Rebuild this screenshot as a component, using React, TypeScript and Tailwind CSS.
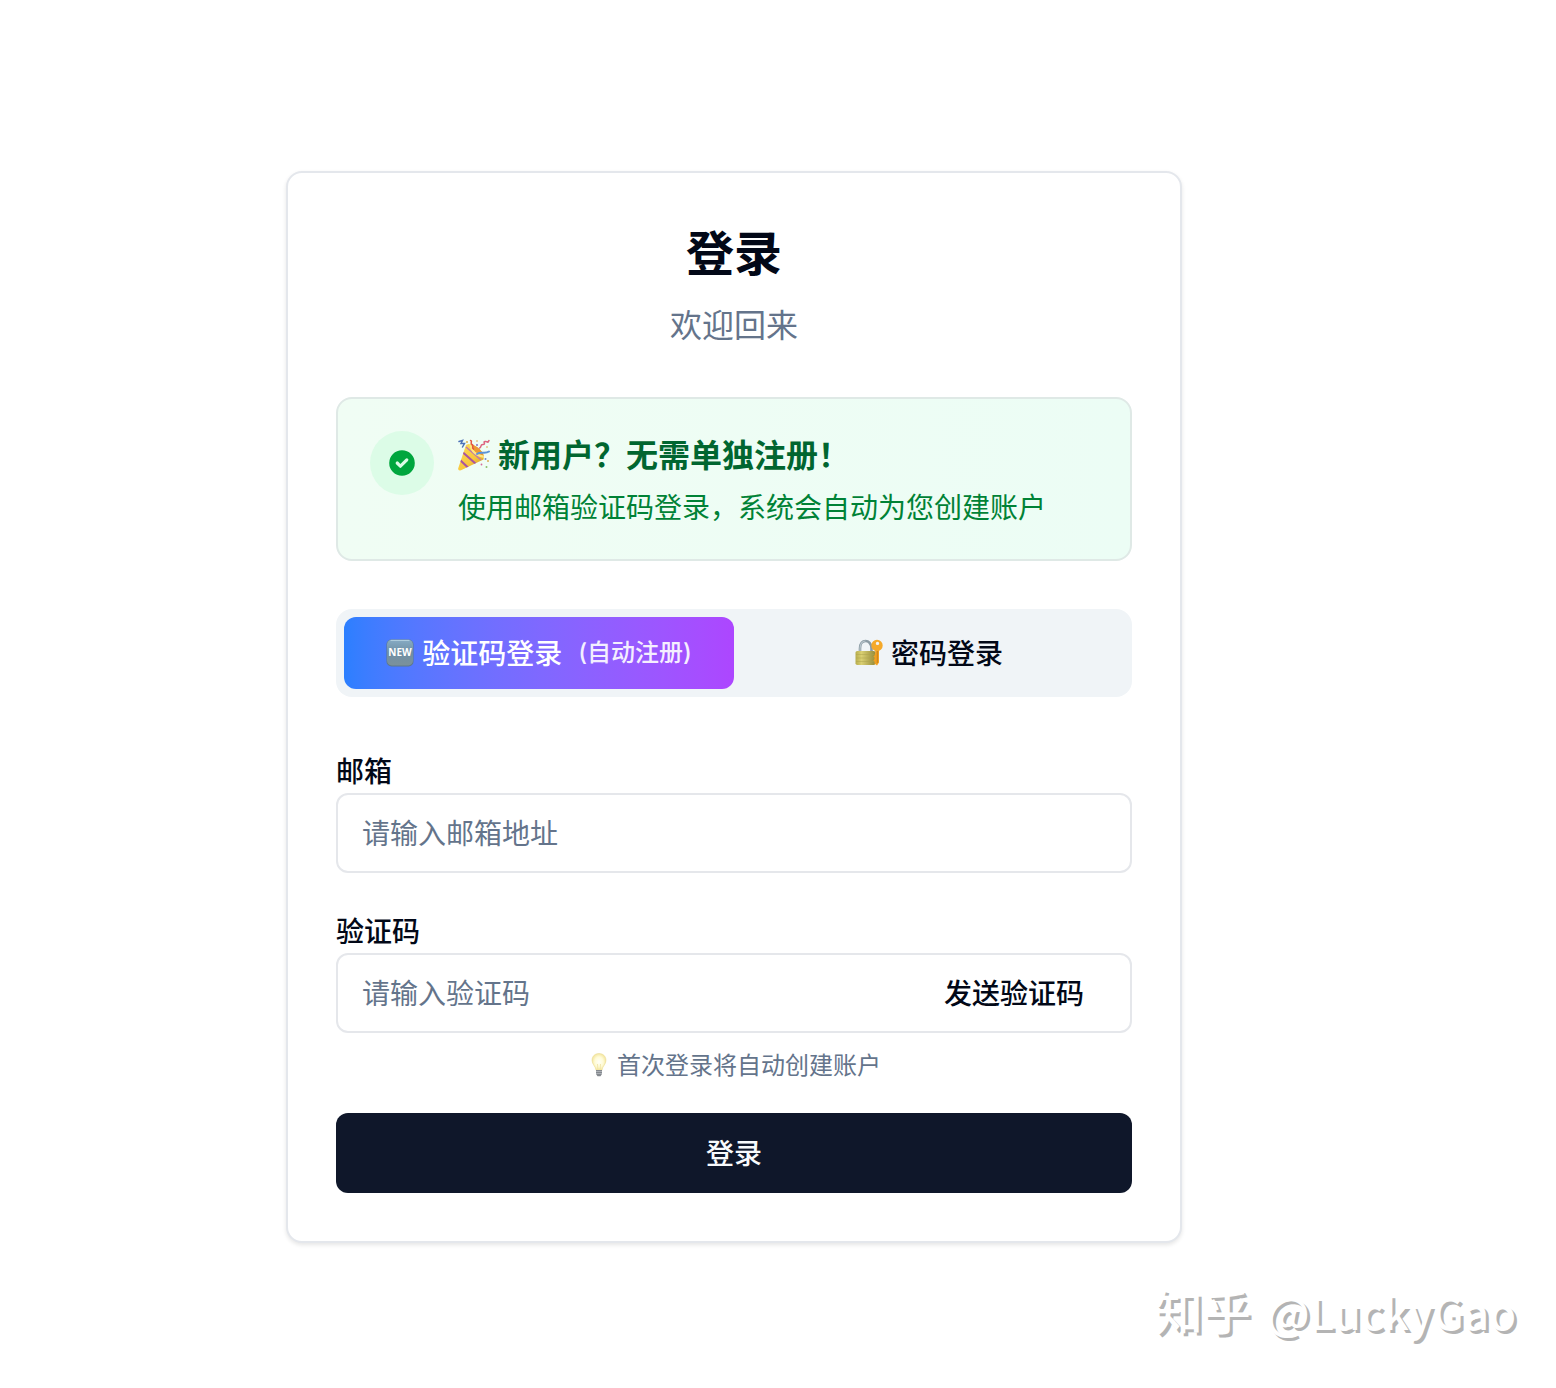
import type { ReactNode } from 'react'

function PartyPopper() {
  return (
    <svg viewBox="0 0 32 32" className="size-8 shrink-0" aria-hidden="true">
      <defs>
        <linearGradient id="cone" x1="0" y1="0" x2="1" y2="1">
          <stop offset="0" stopColor="#ffdf5e" />
          <stop offset="0.55" stopColor="#f8c83c" />
          <stop offset="1" stopColor="#b9781c" />
        </linearGradient>
        <clipPath id="coneClip">
          <path d="M8 6 0.3 29Q-0.500 32 3 31.300L25.500 20.500Q27 13.500 19 8 12 3 8 6Z" />
        </clipPath>
      </defs>
      <g clipPath="url(#coneClip)">
        <path d="M0 0H32V32H0Z" fill="url(#cone)" />
        <path d="M5 13.500 18 25M2 21 11 29.500" stroke="#a9569f" strokeWidth="2.100" />
        <path d="M8 8 23 21" stroke="#c07aa8" strokeWidth="1.600" />
        <path d="M11 3 15 11 20 15 27 17V3Z" fill="#ea9a35" />
        <path d="M12 4C13 12 18 17 27 18" stroke="#ffe680" strokeWidth="2" fill="none" />
      </g>
      <g fill="none" strokeWidth="1.500" strokeLinecap="round">
        <path d="M1 2.500 4.500 1.500 3 4.500 6.500 4.500 4.500 8" stroke="#4d72b8" />
        <path d="M12.500 1.500C15 2 11.500 4.500 14 5.500S13 8.500 15.500 10" stroke="#e4563f" />
        <path d="M21.500 9C24 8.500 21.500 5.500 25 5.500S24 2 27.500 2.500 29 4.500 31 1.500" stroke="#dd6580" />
        <path d="M19 15C23 12 27 15.500 31 12.500" stroke="#5c93d6" strokeWidth="2" />
      </g>
      <g fill="#d9a441">
        <circle cx="9" cy="3" r="0.900" />
        <circle cx="19" cy="2" r="0.800" />
        <circle cx="29" cy="8" r="0.800" />
        <circle cx="30" cy="22" r="0.900" />
      </g>
      <circle cx="27.500" cy="20" r="1" fill="#6f88c9" />
      <circle cx="28.500" cy="28" r="1" fill="#8bbf6a" />
      <circle cx="23.500" cy="25.500" r="0.900" fill="#d56a9a" />
      <circle cx="19" cy="6" r="1" fill="#8a6fc0" />
    </svg>
  )
}

function NewBadge() {
  return (
    <svg viewBox="0 0 28 28" className="size-7 shrink-0" aria-hidden="true">
      <defs>
        <linearGradient id="badge" x1="0" y1="0" x2="0" y2="1">
          <stop offset="0" stopColor="#86abc4" />
          <stop offset="0.5" stopColor="#6f8fa5" />
          <stop offset="1" stopColor="#7b919c" />
        </linearGradient>
      </defs>
      <rect x="0.5" y="0.5" width="27" height="27" rx="5" fill="#5d7889" />
      <rect x="1" y="0.8" width="26" height="25.6" rx="4.6" fill="url(#badge)" />
      <path d="M5 1.4H23" stroke="#b5d0df" strokeWidth="1" strokeLinecap="round" />
      <text x="14" y="17" textAnchor="middle" fill="#fff" fontFamily="Open Sans, sans-serif" fontWeight="700" fontSize="10">NEW</text>
    </svg>
  )
}

function LockWithKey() {
  return (
    <svg viewBox="0 0 28 28" className="size-7 shrink-0" aria-hidden="true">
      <defs>
        <linearGradient id="lock" x1="0" y1="0" x2="1" y2="0">
          <stop offset="0" stopColor="#b7ad4d" />
          <stop offset="0.3" stopColor="#d9cf72" />
          <stop offset="1" stopColor="#958a38" />
        </linearGradient>
      </defs>
      <path d="M5 14V9.500C5 4.500 7.500 2 10.500 2S16.500 4.500 16.500 9.500V14" fill="none" stroke="#8b9aa3" strokeWidth="2.600" />
      <path d="M5 14V9.500C5 4.500 7.500 2 10.500 2" fill="none" stroke="#b7c4cb" strokeWidth="1.200" />
      <rect x="0.500" y="12" width="20" height="14" rx="1.800" fill="url(#lock)" />
      <path d="M1 15.500H20M1 19H20M1 22.500H20" stroke="#aca24c" strokeWidth="0.500" />
      <path d="M20.300 11 24 11V23.500L22 26.500 19.500 24.500V22.500L18.300 21.500 19.500 20V18.500L18.300 17.300 20 16Z" fill="#f0a020" />
      <path fillRule="evenodd" d="M22 0.800A5.700 5.700 0 1 1 22 12.200 5.700 5.700 0 0 1 22 0.800ZM22.500 2.700A1.700 1.700 0 1 0 22.500 6.100 1.700 1.700 0 0 0 22.500 2.700Z" fill="#f5a92a" />
      <path d="M22.300 12V24" stroke="#c67d17" strokeWidth="0.900" />
    </svg>
  )
}

function LightBulb() {
  return (
    <svg viewBox="0 0 24 24" className="size-6 shrink-0" aria-hidden="true">
      <defs>
        <radialGradient id="bulb" cx="0.5" cy="0.5" r="0.6">
          <stop offset="0" stopColor="#fffff8" />
          <stop offset="0.5" stopColor="#fffbd6" />
          <stop offset="1" stopColor="#eedc88" />
        </radialGradient>
      </defs>
      <path d="M12 0.500C7.700 0.500 5 3.500 5 7.300 5 11.300 8.500 13 9 17.300H15C15.500 13 19 11.300 19 7.300 19 3.500 16.300 0.500 12 0.500Z" fill="url(#bulb)" stroke="#e9d98a" strokeWidth="0.500" />
      <path d="M10.500 11 11 16.500M13.500 11 13 16.500" stroke="#e8d88c" strokeWidth="0.600" fill="none" />
      <path d="M9 17H15V21L13.500 23.300H10.500L9 21Z" fill="#85898f" />
      <path d="M9 18.500H15M9 20.500H15" stroke="#bfc3c7" strokeWidth="0.700" />
    </svg>
  )
}

function CheckCircle() {
  return (
    <svg viewBox="0 0 20 20" className="size-8" fill="#00a63e" aria-hidden="true">
      <path fillRule="evenodd" clipRule="evenodd" d="M10 18a8 8 0 100-16 8 8 0 000 16zm3.707-9.293a1 1 0 00-1.414-1.414L9 10.586 7.707 9.293a1 1 0 00-1.414 1.414l2 2a1 1 0 001.414 0l4-4z" />
    </svg>
  )
}

function Field({ id, label, placeholder, type, children }: { id: string; label: string; placeholder: string; type: string; children?: ReactNode }) {
  return (
    <div className="flex flex-col gap-2">
      <label htmlFor={id} className="text-[28px] leading-7 font-medium">{label}</label>
      <div className="flex h-20 items-center rounded-xl border-2 border-[#e5e7eb]">
        <input id={id} type={type} placeholder={placeholder} className="h-full min-w-0 flex-1 bg-transparent px-6 text-[28px] outline-none placeholder:text-[#64748b]" />
        {children}
      </div>
    </div>
  )
}

export default function App() {
  return (
    <div className="flex min-h-screen flex-col bg-white pt-[171px] font-['Open_Sans','Noto_Sans_CJK_SC',sans-serif] text-[#020817]">
      <div className="flex justify-center pr-[88px]">
        <main className="w-full max-w-4xl rounded-2xl border-2 border-[#e4e7ec] bg-white p-12 shadow-[0_2px_4px_rgba(0,0,0,0.1)]">
          <header className="text-center">
            <h1 className="text-5xl leading-[64px] font-semibold">登录</h1>
            <p className="mt-4 text-[32px] leading-[48px] text-[#64748b]">欢迎回来</p>
          </header>

          <section className="mt-12 flex gap-6 rounded-2xl border-2 border-[#dfe9e6] bg-linear-to-r from-[#f0fdf4] to-[#ecfdf5] p-8">
            <div className="flex size-16 shrink-0 items-center justify-center rounded-full bg-[#dcfce7]">
              <CheckCircle />
            </div>
            <div>
              <h2 className="flex items-center gap-2 text-[32px] leading-[48px] font-semibold text-[#016630]">
                <PartyPopper />
                <span>新用户？无需单独注册！</span>
              </h2>
              <p className="mt-2 text-[28px] leading-10 text-[#008236]">使用邮箱验证码登录，系统会自动为您创建账户</p>
            </div>
          </section>

          <div role="tablist" className="mt-12 grid grid-cols-2 rounded-2xl bg-[#f0f4f7] p-2">
            <button role="tab" aria-selected="true" type="button" className="flex h-[72px] items-center justify-center gap-2 rounded-xl bg-linear-to-r from-[#2b7fff] to-[#ad46ff] text-[28px] font-medium text-white">
              <NewBadge />
              <span>验证码登录</span>
              <span className="ml-2 font-['Inter','Noto_Sans_CJK_SC',sans-serif] text-2xl opacity-90">(自动注册)</span>
            </button>
            <button role="tab" aria-selected="false" type="button" className="flex h-[72px] items-center justify-center gap-2 rounded-xl text-[28px] font-medium">
              <LockWithKey />
              <span>密码登录</span>
            </button>
          </div>

          <form className="mt-[60px]" onSubmit={(e) => e.preventDefault()}>
            <div className="flex flex-col gap-11">
              <Field id="email" type="email" label="邮箱" placeholder="请输入邮箱地址" />
              <Field id="code" type="text" label="验证码" placeholder="请输入验证码">
                <button type="button" className="h-full shrink-0 pr-[46px] pl-12 text-[28px] font-medium">发送验证码</button>
              </Field>
            </div>
            <p className="mt-4 flex items-center justify-center gap-1.5 text-2xl leading-8 text-[#64748b]">
              <LightBulb />
              <span>首次登录将自动创建账户</span>
            </p>
            <button type="submit" className="mt-8 h-20 w-full rounded-xl bg-[#0f172a] text-[28px] font-medium text-[#f8fafc]">登录</button>
          </form>
        </main>
      </div>
      <footer className="mt-[30px] flex items-baseline gap-4 self-end pr-10 font-['Noto_Sans_CJK_SC',sans-serif] leading-[72px] font-medium text-white [text-shadow:3px_3px_0_#b4b4b4]">
        <span className="text-5xl leading-[72px]">知乎</span>
        <span className="text-[44px] leading-[72px]">@LuckyGao</span>
      </footer>
    </div>
  )
}
